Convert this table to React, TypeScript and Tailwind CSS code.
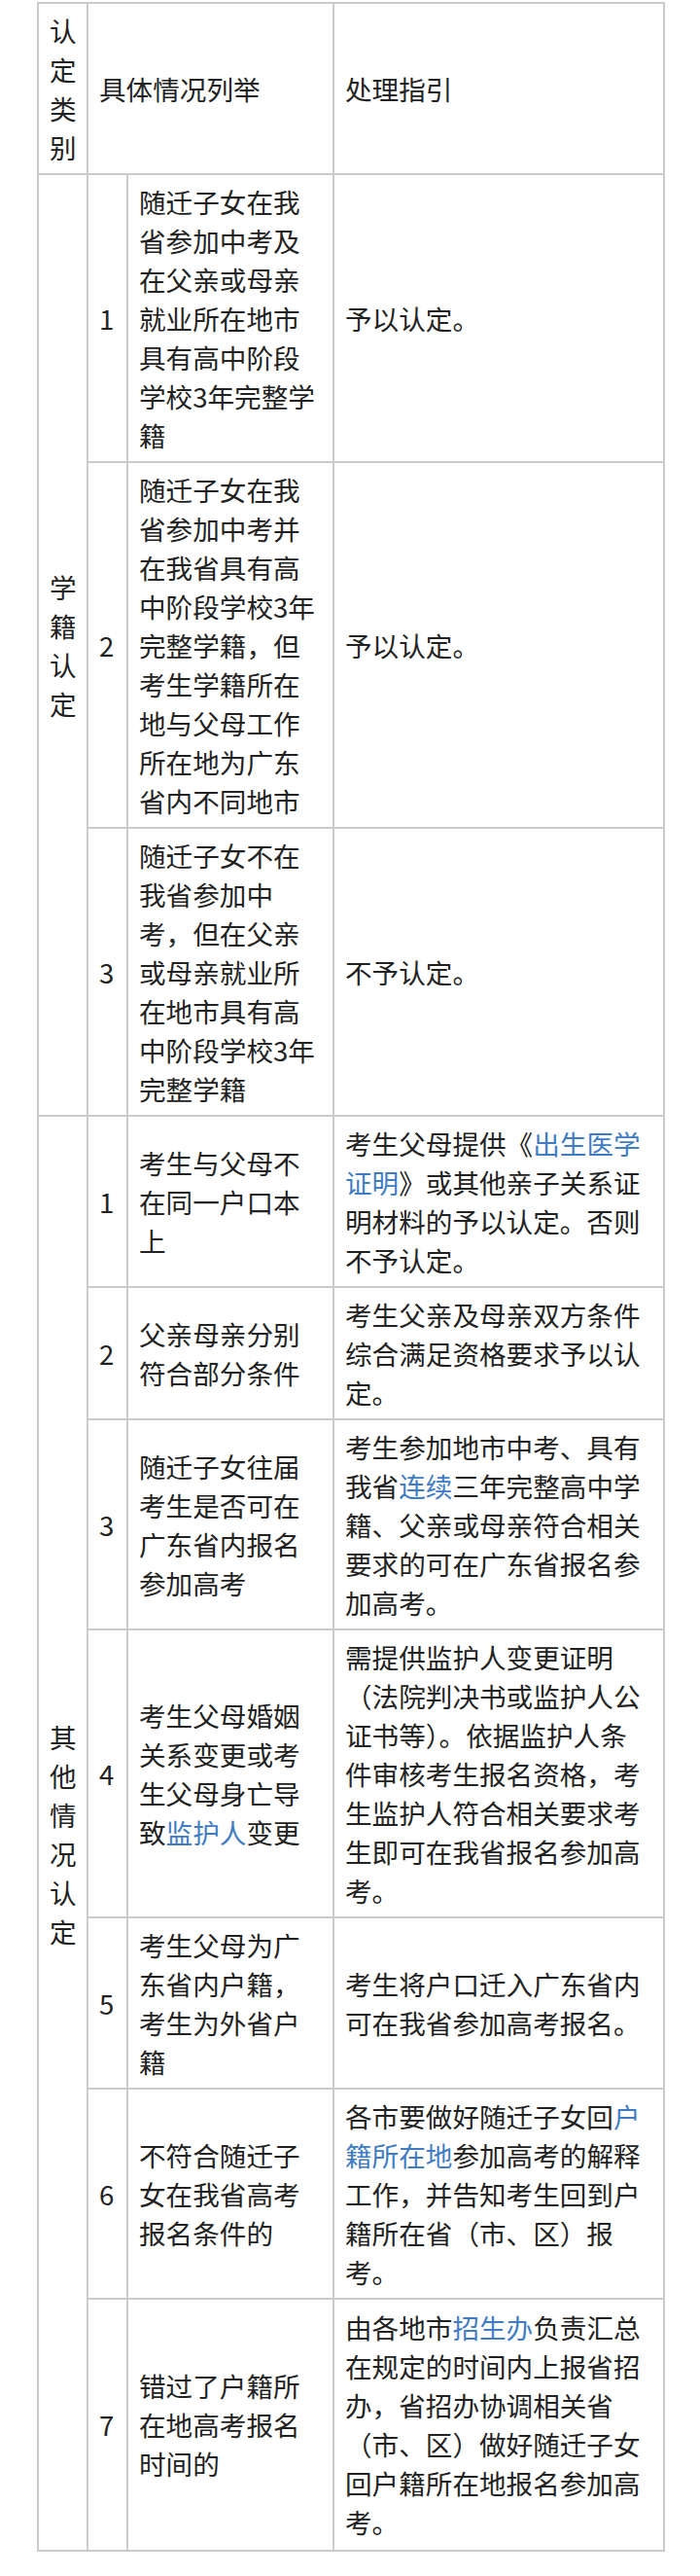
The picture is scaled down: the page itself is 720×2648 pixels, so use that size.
import React from "react";

const L = ({ children }: { children: React.ReactNode }) => (
  <span className="text-[#3f7cc4]">{children}</span>
);

const td = "border-2 border-[#cccccc] px-[11px] py-[7px] align-middle text-left";

export default function App() {
  return (
    <div
      className="w-[720px] min-h-[2648px] bg-white pt-[1px] text-[#222222]"
      style={{ fontFamily: '"Noto Sans CJK SC", "Noto Sans", sans-serif' }}
    >
      <table className="ml-[38px] mt-[1px] w-[644px] table-fixed border-collapse text-[27.6px] leading-[40px]">
        <colgroup>
          <col className="w-[51px]" />
          <col className="w-[41px]" />
          <col className="w-[212px]" />
          <col className="w-[340px]" />
        </colgroup>
        <tbody>
          <tr>
            <td className={td}>认定类别</td>
            <td className={td} colSpan={2}>具体情况列举</td>
            <td className={td}>处理指引</td>
          </tr>
          <tr>
            <td className={td} rowSpan={3}>学籍认定</td>
            <td className={td}>1</td>
            <td className={td}>随迁子女在我省参加中考及在父亲或母亲就业所在地市具有高中阶段学校3年完整学籍</td>
            <td className={td}>予以认定。</td>
          </tr>
          <tr>
            <td className={td}>2</td>
            <td className={td}>随迁子女在我省参加中考并在我省具有高中阶段学校3年完整学籍，但考生学籍所在地与父母工作所在地为广东省内不同地市</td>
            <td className={td}>予以认定。</td>
          </tr>
          <tr>
            <td className={td}>3</td>
            <td className={td}>随迁子女不在我省参加中考，但在父亲或母亲就业所在地市具有高中阶段学校3年完整学籍</td>
            <td className={td}>不予认定。</td>
          </tr>
          <tr>
            <td className={td} rowSpan={7}>其他情况认定</td>
            <td className={td}>1</td>
            <td className={td}>考生与父母不在同一户口本上</td>
            <td className={td}>
              考生父母提供《<L>出生医学证明</L>》或其他亲子关系证明材料的予以认定。否则不予认定。
            </td>
          </tr>
          <tr>
            <td className={td}>2</td>
            <td className={td}>父亲母亲分别符合部分条件</td>
            <td className={td}>考生父亲及母亲双方条件综合满足资格要求予以认定。</td>
          </tr>
          <tr>
            <td className={td}>3</td>
            <td className={td}>随迁子女往届考生是否可在广东省内报名参加高考</td>
            <td className={td}>
              考生参加地市中考、具有我省<L>连续</L>三年完整高中学籍、父亲或母亲符合相关要求的可在广东省报名参加高考。
            </td>
          </tr>
          <tr>
            <td className={td}>4</td>
            <td className={td}>
              考生父母婚姻关系变更或考生父母身亡导致<L>监护人</L>变更
            </td>
            <td className={td}>
              需提供监护人变更证明（法院判决书或监护人公证书等）。依据监护人条件审核考生报名资格，考生监护人符合相关要求考生即可在我省报名参加高考。
            </td>
          </tr>
          <tr>
            <td className={td}>5</td>
            <td className={td}>考生父母为广东省内户籍，考生为外省户籍</td>
            <td className={td}>考生将户口迁入广东省内可在我省参加高考报名。</td>
          </tr>
          <tr>
            <td className={td}>6</td>
            <td className={td}>不符合随迁子女在我省高考报名条件的</td>
            <td className={td}>
              各市要做好随迁子女回<L>户籍所在地</L>参加高考的解释工作，并告知考生回到户籍所在省（市、区）报考。
            </td>
          </tr>
          <tr>
            <td className={`${td} pb-[9px] pt-[8px]`}>7</td>
            <td className={`${td} pb-[9px] pt-[8px]`}>错过了户籍所在地高考报名时间的</td>
            <td className={`${td} pb-[9px] pt-[8px]`}>
              由各地市<L>招生办</L>负责汇总在规定的时间内上报省招办，省招办协调相关省（市、区）做好随迁子女回户籍所在地报名参加高考。
            </td>
          </tr>
        </tbody>
      </table>
    </div>
  );
}
